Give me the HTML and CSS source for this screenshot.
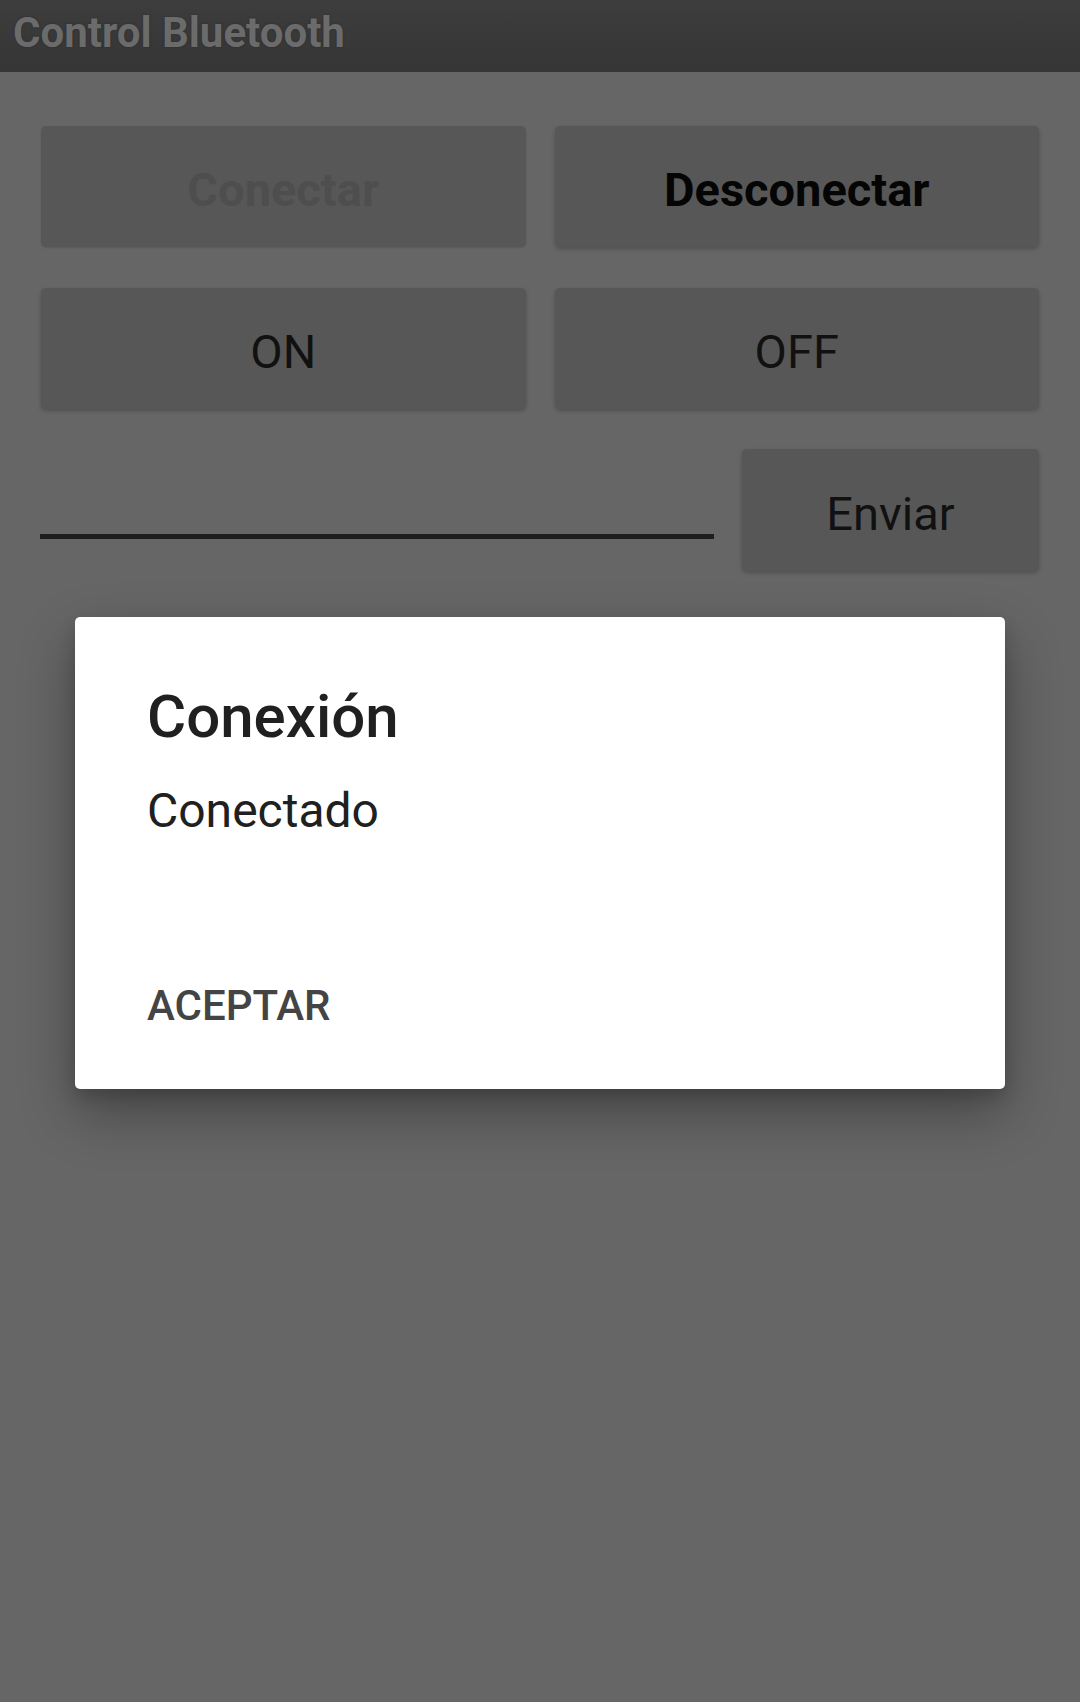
FILE: index.html
```html
<!DOCTYPE html>
<html lang="es">
  <head>
    <meta charset="UTF-8" />
    <meta name="viewport" content="width=device-width, initial-scale=1.0" />
    <title>Control Bluetooth</title>
    <link rel="stylesheet" href="styles.css">
  </head>
  <body>
    <div class="toolbar">
      <span class="toolbar-title">Control Bluetooth</span>
    </div>

    <div class="content">
      <div class="btn-grid">
        <button class="btn btn-bold" disabled>Conectar</button>
        <button class="btn btn-bold">Desconectar</button>
        <button class="btn">ON</button>
        <button class="btn">OFF</button>
      </div>

      <div class="send-row">
        <div class="text-input"></div>
        <button class="btn btn-send">Enviar</button>
      </div>

      <div class="dialog">
        <div class="dialog-title">Conexión</div>
        <div class="dialog-msg">Conectado</div>
        <div class="dialog-action">ACEPTAR</div>
      </div>
    </div>
  </body>
</html>
```

FILE: styles.css
```css
body, html {
  margin: 0;
  font-family: Roboto, "Noto Sans", sans-serif;
  background: #666666;
  height: 100%;
}

.toolbar {
  height: 72px;
  box-sizing: border-box;
  padding: 8px 0 0 13px;
  background: linear-gradient(#3d3d3d, #353535);
}

.toolbar-title {
  font-size: 42px;
  font-weight: 700;
  color: #6b6b6b;
  text-shadow: 0 0 2px #2a2a2a;
}

.content {
  padding: 54px 41px 0;
}

.btn-grid {
  display: grid;
  grid-template-columns: 1fr 1fr;
  column-gap: 29px;
  row-gap: 41px;
}

.btn {
  -webkit-appearance: none;
  border: none;
  height: 121px;
  padding: 6px 0 0;
  border-radius: 5px;
  background: #575757;
  color: #111111;
  font-family: Roboto, "Noto Sans", sans-serif;
  font-size: 47px;
  font-weight: 400;
  box-shadow: 0 2px 4px rgba(0, 0, 0, 0.22);
}

.btn-bold {
  font-weight: 700;
  color: #050505;
}

.btn:disabled {
  color: #4e4e4e;
  box-shadow: 0 1px 2px rgba(0, 0, 0, 0.12);
}

.send-row {
  display: flex;
  align-items: flex-start;
  gap: 28px;
  margin-top: 40px;
}

.text-input {
  flex: 1;
  height: 85px;
  margin-left: -1px;
  border-bottom: 5px solid #1e1e1e;
}

.btn-send {
  width: 297px;
  height: 122px;
}

.dialog {
  margin: 46px 34px 0;
  padding: 65px 72px 58px;
  background: #ffffff;
  border-radius: 5px;
  box-shadow: 0 24px 56px rgba(0, 0, 0, 0.32), 0 8px 16px rgba(0, 0, 0, 0.15);
}

.dialog-title {
  font-size: 60px;
  line-height: 70px;
  font-weight: 500;
  color: #202020;
}

.dialog-msg {
  margin-top: 31px;
  font-size: 48px;
  line-height: 56px;
  color: #202020;
}

.dialog-action {
  margin-top: 142px;
  font-size: 42px;
  line-height: 50px;
  font-weight: 500;
  color: #444444;
}
```
